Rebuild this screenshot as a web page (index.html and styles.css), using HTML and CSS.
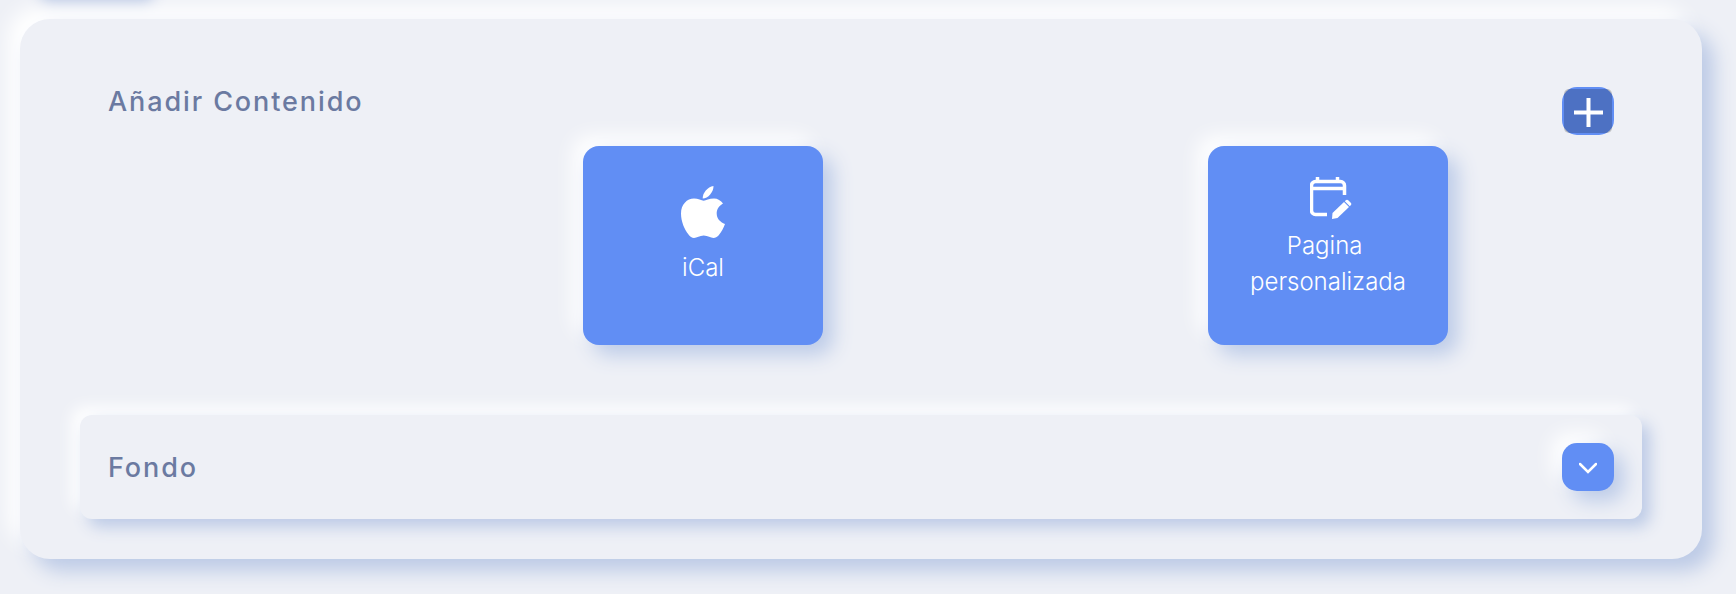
FILE: index.html
```html
<html>
    <head>
        <meta charset="UTF-8">
        <title>Contenido</title>
        <link rel="stylesheet" href="styles.css">
    </head>

    <body>
        <div class="top-tab"></div>

        <div class="panel">
            <!-- Add content -->
            <div class="add-section">
                <div class="section-head">
                    <div class="section-title">Añadir Contenido</div>
                    <button class="square-btn pressed">
                        <svg width="29" height="29" viewBox="0 0 29 29"><path d="M14.500 0V29M0 14.500H29" stroke="#fff" stroke-width="4" fill="none"/></svg>
                    </button>
                </div>
                <div class="tiles">
                    <div class="tile tile-short">
                        <svg width="44" height="52" viewBox="0 0 44 52">
                            <path fill="#fff" d="M32.500 0C32.700 6 27 12.500 21.700 12.500C21.500 7 26.500 1 32.500 0Z"/>
                            <path fill="#fff" d="M22.700 14.700C25 14.700 28 12.500 33 12.500C36.500 12.500 40 14.500 42 17.500C38 20 35.700 23 35.700 27.500C35.700 32.500 39 36 44 38C42.500 42 40.500 46 37.500 49.500C36 51 34.500 52 32.500 52C29.500 52 27 49.500 22.700 49.500C18.500 49.500 16 52 13 52C11 52 9 50.500 7.500 48.500C3.500 43.500 0 35.500 0 27.500C0 18.500 6 12.500 13 12.500C17 12.500 20.500 14.700 22.700 14.700Z"/>
                        </svg>
                        <span class="tile-label">iCal</span>
                    </div>
                    <div class="tile tile-tall">
                        <svg width="42" height="42" viewBox="0 0 42 42">
                            <path fill="none" stroke="#fff" stroke-width="3.500" d="M34.500 18V8.500A4 4 0 0 0 30.500 4.500H5.500A4 4 0 0 0 1.500 8.500V33.500A4 4 0 0 0 5.500 37.500H17M1.500 11.500H34.500M7.500 0V5M27.500 0V5"/>
                            <path fill="#fff" d="M22.500 36L34 25L39 30L27.500 41L22 42Z"/>
                            <path fill="#fff" d="M35.500 23.500A2 2 0 0 1 38.500 23.500L40.500 25.500A2 2 0 0 1 40.500 28.500L39.800 29.200L34.800 24.200Z"/>
                        </svg>
                        <span class="tile-label">Pagina&nbsp; personalizada</span>
                    </div>
                </div>
            </div>

            <!-- Background -->
            <div class="accordion">
                <div class="section-title">Fondo</div>
                <button class="square-btn raised">
                    <svg width="18" height="12" viewBox="0 0 18 12"><path d="M1 2L9 10L17 2" stroke="#fff" stroke-width="2.500" stroke-linecap="round" fill="none"/></svg>
                </button>
            </div>
        </div>
    </body>
</html>
```

FILE: styles.css
```css
*{
    box-sizing: border-box;
    font-family: Inter, "Liberation Sans", sans-serif;
}

body, html{
    margin: 0;
    height: 100%;
    overflow: hidden;
    background-color: #eef0f6;
}

body{
    padding: 19px 34px 0 20px;
}

/* bit of the card above, only the shadow is still in view */
.top-tab{
    width: 114px;
    height: 40px;
    margin: -59px 0 19px 14px;
    border-radius: 12px;
    background-color: #eef0f6;
    box-shadow: 6px 6px 14px #b9c7e4;
}

.panel{
    height: 540px;
    padding: 68px 60px 40px;
    border-radius: 30px;
    background-color: #eef0f6;
    box-shadow: 12px 12px 20px #bccae6, -12px -12px 20px #ffffff;
}

.add-section{
    height: 309px;
}

.section-head{
    display: flex;
    justify-content: space-between;
    align-items: flex-start;
    padding: 0 28px;
}

.section-title{
    font-size: 27px;
    line-height: 29px;
    font-weight: 500;
    letter-spacing: 1.9px;
    color: #6b7aa1;
}

.square-btn{
    position: relative;
    display: flex;
    justify-content: center;
    align-items: center;
    width: 52px;
    height: 48px;
    padding: 2px 0 0;
    border: none;
    border-radius: 15px;
    background-color: #618ef4;
}

.square-btn svg{
    position: relative;
}

/* dark square that sits on top of the pressed button */
.pressed::before{
    content: "";
    position: absolute;
    top: 2px;
    right: 2px;
    bottom: 2px;
    left: 2px;
    border-radius: 5px;
    background-color: rgba(0, 0, 0, 0.2);
}

.raised{
    box-shadow: 10px 10px 20px #bccbe8, -10px -10px 20px #ffffff;
}

.tiles{
    display: flex;
    gap: 385px;
    padding-left: 503px;
    margin-top: 11px;
}

.tile{
    display: flex;
    flex-direction: column;
    align-items: center;
    width: 240px;
    height: 199px;
    padding-left: 35px;
    padding-right: 35px;
    border-radius: 16px;
    background-color: #618ef4;
    box-shadow: 10px 10px 20px #bccbe8, -10px -10px 20px #ffffff;
}

.tile-short{
    padding-top: 40px;
}

.tile-short .tile-label{
    margin-top: 12px;
}

.tile-tall{
    padding-top: 31px;
}

.tile-tall svg{
    margin-left: 6px;
}

.tile-tall .tile-label{
    margin-top: 9px;
}

.tile-label{
    font-size: 24px;
    line-height: 36px;
    font-weight: 300;
    text-align: center;
    color: #fff;
}

.accordion{
    display: flex;
    justify-content: space-between;
    align-items: center;
    height: 104px;
    margin-top: 19px;
    padding: 0 28px;
    border-radius: 12px;
    background-color: #eef0f6;
    box-shadow: 8px 8px 16px #bccae6, -8px -8px 16px #ffffff;
}
```
